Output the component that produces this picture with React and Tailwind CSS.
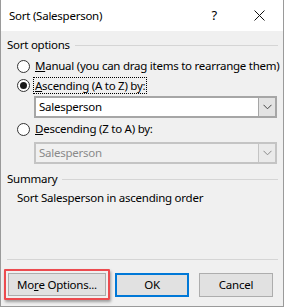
import React from "react";

const font = { fontFamily: '"Noto Sans", "Open Sans", sans-serif' };

function Radio({ checked }) {
  return (
    <span className="relative flex h-[13px] w-[13px] shrink-0 items-center justify-center rounded-full border border-[#333333] bg-white">
      {checked && <span className="h-[7px] w-[7px] rounded-full bg-[#1a1a1a]" />}
    </span>
  );
}

function Chevron({ color }) {
  return (
    <svg width="9" height="6" viewBox="0 0 9 6" fill="none">
      <path d="M0.5 0.8 L4.5 4.8 L8.5 0.8" stroke={color} strokeWidth="1" />
    </svg>
  );
}

function Select({ disabled }) {
  return (
    <div
      className={`ml-[27px] flex h-[22px] w-[243px] border-2 ${
        disabled ? "border-[#c4c4c4] bg-[#f0f0f0]" : "border-[#a6a6a6] bg-white"
      }`}
    >
      <div
        className={`flex flex-1 items-center pl-[3px] ${
          disabled ? "text-[#8a8a8a]" : "text-black"
        }`}
      >
        Salesperson
      </div>
      <div
        className={`flex w-[17px] items-center justify-center border-l ${
          disabled ? "border-[#c4c4c4] bg-[#eaeaea]" : "border-[#a6a6a6] bg-[#e3e3e3]"
        }`}
      >
        <Chevron color={disabled ? "#8a8a8a" : "#444444"} />
      </div>
    </div>
  );
}

function Header({ label }) {
  return (
    <div className="flex h-[16px] items-center">
      <span className="leading-[16px] text-black">{label}</span>
      <div className="ml-[5px] mr-[5px] h-px flex-1 bg-[#d5d5d5]" />
    </div>
  );
}

export default function App() {
  return (
    <div
      className="flex h-[307px] w-[284px] flex-col border-x border-b border-[#9a9a9a] bg-[#f0f0f0] text-[11.5px] tracking-[-0.25px] text-black"
      style={font}
    >
      {/* Title bar */}
      <div className="flex h-[31px] shrink-0 items-center bg-white pl-[8px]">
        <span>Sort (Salesperson)</span>
        <span className="ml-auto mr-[37px] text-[13px]">?</span>
        <svg className="mr-[18px]" width="11" height="11" viewBox="0 0 11 11">
          <path d="M0.5 0.5 L10.5 10.5 M10.5 0.5 L0.5 10.5" stroke="#111" strokeWidth="1" />
        </svg>
      </div>

      <div className="flex flex-1 flex-col pl-[6px]">
        <div className="mt-[6px]">
          <Header label="Sort options" />
        </div>

        <div className="mt-[4px] flex h-[18px] items-center pl-[10px]">
          <Radio />
          <span className="ml-[5px] whitespace-nowrap leading-[16px]">
            <span className="underline">M</span>anual (you can drag items to rearrange them)
          </span>
        </div>

        <div className="mt-[1px] flex h-[18px] items-center pl-[10px]">
          <Radio checked />
          <span className="ml-[3px] border border-dotted border-black px-[1px] leading-[15px]">
            <span className="underline">A</span>scending (A to Z) by:
          </span>
        </div>

        <div className="mt-[2px]">
          <Select />
        </div>

        <div className="mt-[2px] flex h-[18px] items-center pl-[10px]">
          <Radio />
          <span className="ml-[5px] leading-[16px]">
            <span className="underline">D</span>escending (Z to A) by:
          </span>
        </div>

        <div className="mt-[4px]">
          <Select disabled />
        </div>

        <div className="mt-[7px]">
          <Header label="Summary" />
        </div>

        <div className="mt-[3px] pl-[10px] leading-[16px]">
          Sort Salesperson in ascending order
        </div>

        <div className="mt-auto mr-[5px] h-px bg-[#d5d5d5]" />

        <div className="mb-[6px] mt-[9px] flex items-center">
          <div className="-ml-[3px] rounded-[1px] border-2 border-[#ec4b4f] p-[2px] shadow-[1px_2px_3px_rgba(0,0,0,0.35)]">
            <div className="flex h-[23px] w-[98px] items-center justify-center border border-[#adadad] bg-[#e1e1e1]">
              Mo<span className="underline">r</span>e Options...
            </div>
          </div>
          <div className="ml-[5px] flex h-[24px] w-[74px] items-center justify-center border-2 border-[#0078d7] bg-[#e1e1e1]">
            OK
          </div>
          <div className="ml-[10px] flex h-[24px] w-[74px] items-center justify-center border border-[#adadad] bg-[#e1e1e1]">
            Cancel
          </div>
        </div>
      </div>
    </div>
  );
}
